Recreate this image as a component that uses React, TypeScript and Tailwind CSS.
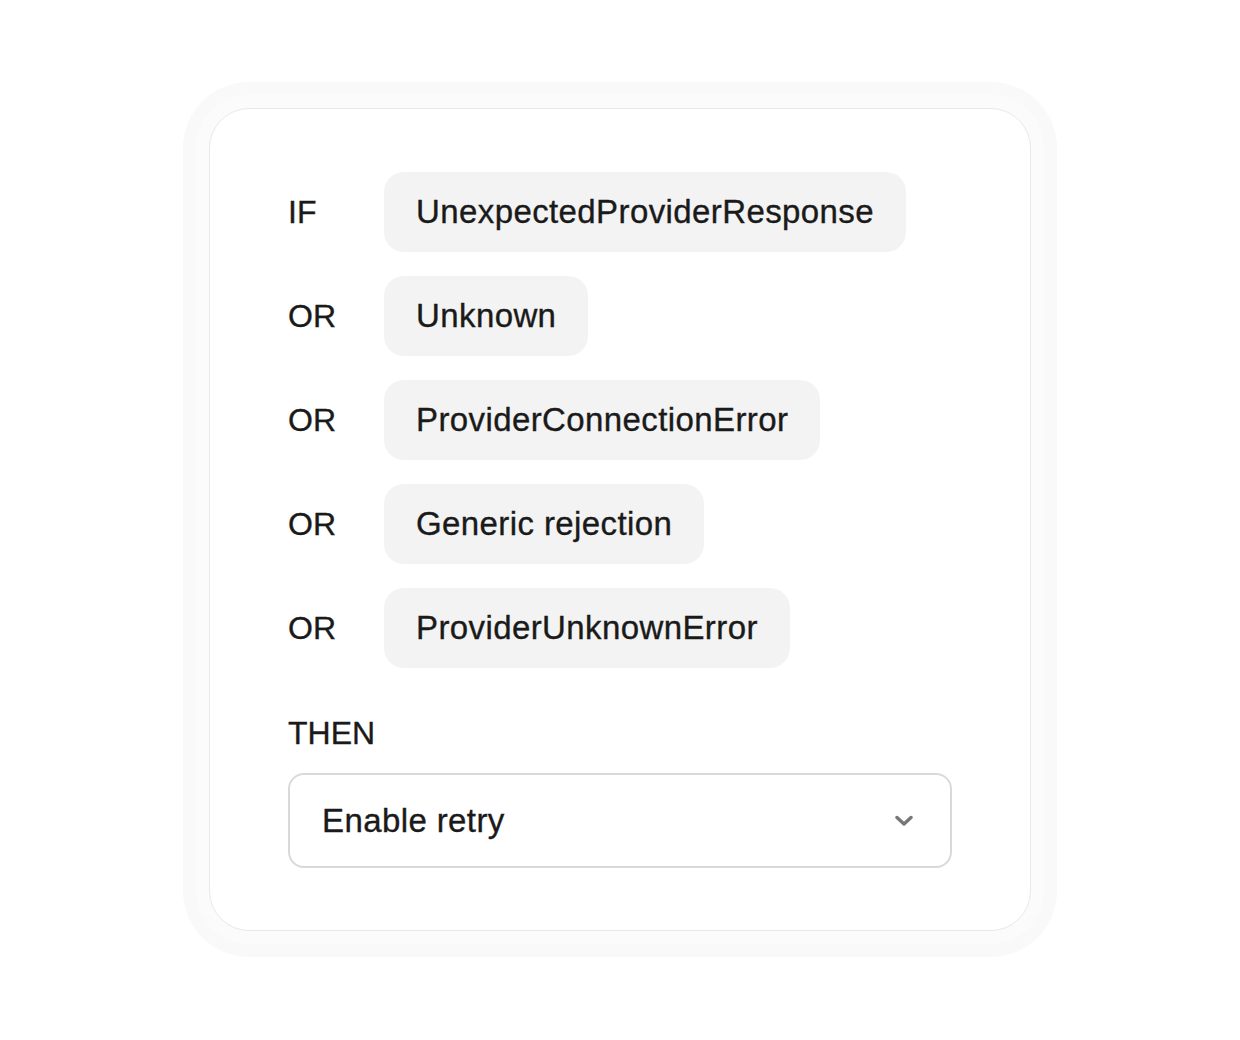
const conditions = [
  { label: 'IF', value: 'UnexpectedProviderResponse' },
  { label: 'OR', value: 'Unknown' },
  { label: 'OR', value: 'ProviderConnectionError' },
  { label: 'OR', value: 'Generic rejection' },
  { label: 'OR', value: 'ProviderUnknownError' },
];

export default function App() {
  return (
    <div
      className="min-h-[1040px] w-full bg-white pt-[108px] flex justify-center text-[#1a1a1a] [-webkit-text-stroke:0.35px_#1a1a1a]"
      style={{ fontFamily: '"Liberation Sans", Arial, sans-serif' }}
    >
      <div className="w-[822px] h-[823px] rounded-[40px] bg-white border border-[#e9e9e9] shadow-[0_0_0_13px_#fbfbfb,0_0_0_26px_#f9f9f9] px-[78px] pt-[63px]">
        <div className="flex flex-col gap-6">
          {conditions.map((c, i) => (
            <div key={i} className="flex items-center">
              <div className="w-24 text-[32px] leading-10">{c.label}</div>
              <div className="h-20 flex items-center px-8 rounded-[20px] bg-[#f3f3f3] text-[33px] leading-10 tracking-[0.4px]">
                {c.value}
              </div>
            </div>
          ))}
        </div>
        <div className="mt-[45px] mb-[20px] text-[32px] leading-10">THEN</div>
        <div className="h-[95px] rounded-2xl border-2 border-[#d9d9d9] flex items-center justify-between pl-8 pr-[37px]">
          <span className="text-[33px] leading-10 tracking-[0.4px]">Enable retry</span>
          <svg width="18" height="12" viewBox="0 0 18 12" fill="none">
            <path d="M2 2.5 L9 9 L16 2.5" stroke="#777" strokeWidth="3.4" strokeLinecap="round" strokeLinejoin="round" />
          </svg>
        </div>
      </div>
    </div>
  );
}
